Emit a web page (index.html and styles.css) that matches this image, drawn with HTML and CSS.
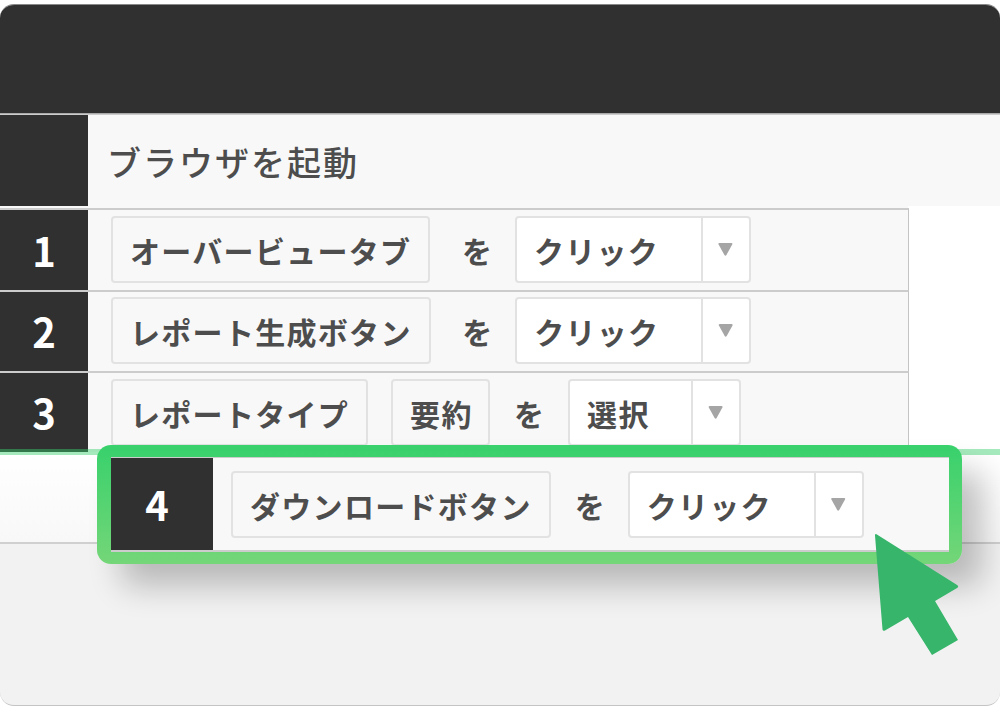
FILE: index.html
```html
<!DOCTYPE html>
<html lang="ja">
  <head>
    <meta charset="UTF-8" />
    <meta name="viewport" content="width=device-width, initial-scale=1.0" />
    <title>steps</title>
    <link rel="stylesheet" href="styles.css">
  </head>
  <body>
    <div class="frame">
      <div class="header"></div>

      <div class="steps">
        <div class="start">
          <div class="num"></div>
          <div class="start-label">ブラウザを起動</div>
        </div>

        <div class="row row-first">
          <div class="num">1</div>
          <div class="row-body">
            <div class="chip">オーバービュータブ</div>
            <div class="wo">を</div>
            <div class="select">
              <div class="select-value">クリック</div>
              <div class="select-arrow"><span class="tri"></span></div>
            </div>
          </div>
        </div>

        <div class="row">
          <div class="num">2</div>
          <div class="row-body">
            <div class="chip">レポート生成ボタン</div>
            <div class="wo">を</div>
            <div class="select">
              <div class="select-value">クリック</div>
              <div class="select-arrow"><span class="tri"></span></div>
            </div>
          </div>
        </div>

        <div class="row row-pair">
          <div class="num">3</div>
          <div class="row-body">
            <div class="chip">レポートタイプ</div>
            <div class="chip chip-short">要約</div>
            <div class="wo">を</div>
            <div class="select select-short">
              <div class="select-value">選択</div>
              <div class="select-arrow"><span class="tri"></span></div>
            </div>
          </div>
        </div>
      </div>

      <div class="row-empty"></div>

      <!-- highlighted step floats over the list -->
      <div class="card">
        <div class="card-inner">
          <div class="num card-num">4</div>
          <div class="row-body card-body">
            <div class="chip">ダウンロードボタン</div>
            <div class="wo">を</div>
            <div class="select">
              <div class="select-value">クリック</div>
              <div class="select-arrow"><span class="tri"></span></div>
            </div>
          </div>
        </div>
      </div>

      <svg class="cursor" width="90" height="130" viewBox="0 0 90 130">
        <path d="M1.5 1.2 L82.5 52.2 Q84 53.5 82.5 54.8 L60 68 L83 107 L57 122 L33 84 L10 97.5 Q8 98.5 7.5 96.5 L0 2.5 Q0 0.5 1.5 1.2 Z" fill="#36b56b"/>
      </svg>
    </div>
  </body>
</html>
```

FILE: styles.css
```css
html{
    box-sizing: border-box;
}
*,*::before,*::after{
    box-sizing: inherit;
}

body{
    margin: 0;
    background: #fff;
    padding: 4px 0;
    font-family: "Noto Sans CJK JP", "Noto Sans", sans-serif;
    color: #4d4d4d;
}

.frame{
    position: relative;
    height: 702px;
    background: #f2f2f2;
    border-radius: 14px;
    overflow: hidden;
    border-top: 1px solid #888;
    border-bottom: 1px solid #c4c4c4;
}

.header{
    height: 109px;
    background: #303030;
    border-bottom: 1px solid #aaa;
}

/* rows */
.steps{
    background: linear-gradient(to right, #f8f8f8 908px, #fff 908px);
}

.start{
    display: flex;
    height: 92px;
    background: #f8f8f8;
    border-top: 1px solid #ccc;
}
.start-label{
    padding: 22px 0 0 19px;
    font-size: 34px;
    font-weight: 500;
    line-height: 50px;
    letter-spacing: 2px;
}

.row{
    display: flex;
    width: 909px;
    height: 81px;
    background: #f8f8f8;
    border-top: 2px solid #ccc;
    border-right: 1px solid #c4c4c4;
}
.row-first{
    height: 82px;
    margin-top: 2px;
}

.num{
    flex: none;
    display: flex;
    justify-content: center;
    align-items: center;
    width: 88px;
    padding-bottom: 1px;
    background: #303030;
    color: #fff;
    font-size: 40px;
    font-weight: 700;
}

.row-body{
    display: flex;
    align-items: flex-start;
    gap: 24px;
    padding: 5px 0 0 23px;
}
.row-first .row-body,
.row-pair .row-body{
    padding-top: 6px;
}

.row-empty{
    height: 92px;
    background: linear-gradient(to bottom, #fff, #f8f8f8);
    border-bottom: 2px solid #d0d0d0;
    position: relative;
}
.row-empty::before{
    content: "";
    position: absolute;
    left: 0;
    right: 0;
    top: -3px;
    height: 6px;
    background: rgba(56, 209, 108, 0.45);
}

/* parts */
.chip{
    height: 67px;
    padding: 0 17px;
    display: flex;
    align-items: center;
    background: #f8f8f8;
    border: 2px solid #e2e2e2;
    border-radius: 4px;
    font-size: 30px;
    font-weight: 700;
    letter-spacing: 1.3px;
    white-space: nowrap;
}
.chip-short{
    width: 99px;
    margin-left: -1px;
}

.wo{
    width: 29px;
    height: 67px;
    display: flex;
    align-items: center;
    font-size: 30px;
    font-weight: 700;
}
.row:not(.row-pair) .wo{
    margin-left: 7.5px;
}

.select{
    display: flex;
    width: 236px;
    height: 67px;
    background: #fff;
    border: 2px solid #e2e2e2;
    border-radius: 4px;
}
.select-short{
    width: 173px;
    margin-left: 1px;
}
.select-value{
    flex: 1;
    display: flex;
    align-items: center;
    padding-left: 17px;
    font-size: 30px;
    font-weight: 700;
    letter-spacing: 1.3px;
}
.select-arrow{
    flex: none;
    width: 48px;
    display: flex;
    justify-content: center;
    align-items: center;
    border-left: 2px solid #e2e2e2;
    padding-right: 1px;
}
.tri{
    width: 15px;
    height: 13px;
    background: #a5a5a5;
    clip-path: path("M1.5 0 L13.5 0 Q15 0 14.3 1.5 L8.5 12 Q7.5 13.5 6.5 12 L0.7 1.5 Q0 0 1.5 0 Z");
}

/* highlighted step */
.card{
    position: absolute;
    left: 97px;
    top: 440px;
    width: 865px;
    height: 119px;
    padding: 12px 13px 12px 14px;
    border-radius: 14px;
    background: linear-gradient(to bottom, #38d16c, #74d678);
    box-shadow: 22px 24px 32px -2px rgba(0, 0, 0, 0.24);
}
.card-inner{
    display: flex;
    height: 100%;
    background: #f8f8f8;
    border-top: 1px solid #ccc;
    border-bottom: 2px solid #ccc;
}
.card-num{
    width: 102px;
    padding-right: 10px;
}
.card-body{
    padding: 13px 0 0 18px;
}

.cursor{
    position: absolute;
    left: 875px;
    top: 528px;
}
```
